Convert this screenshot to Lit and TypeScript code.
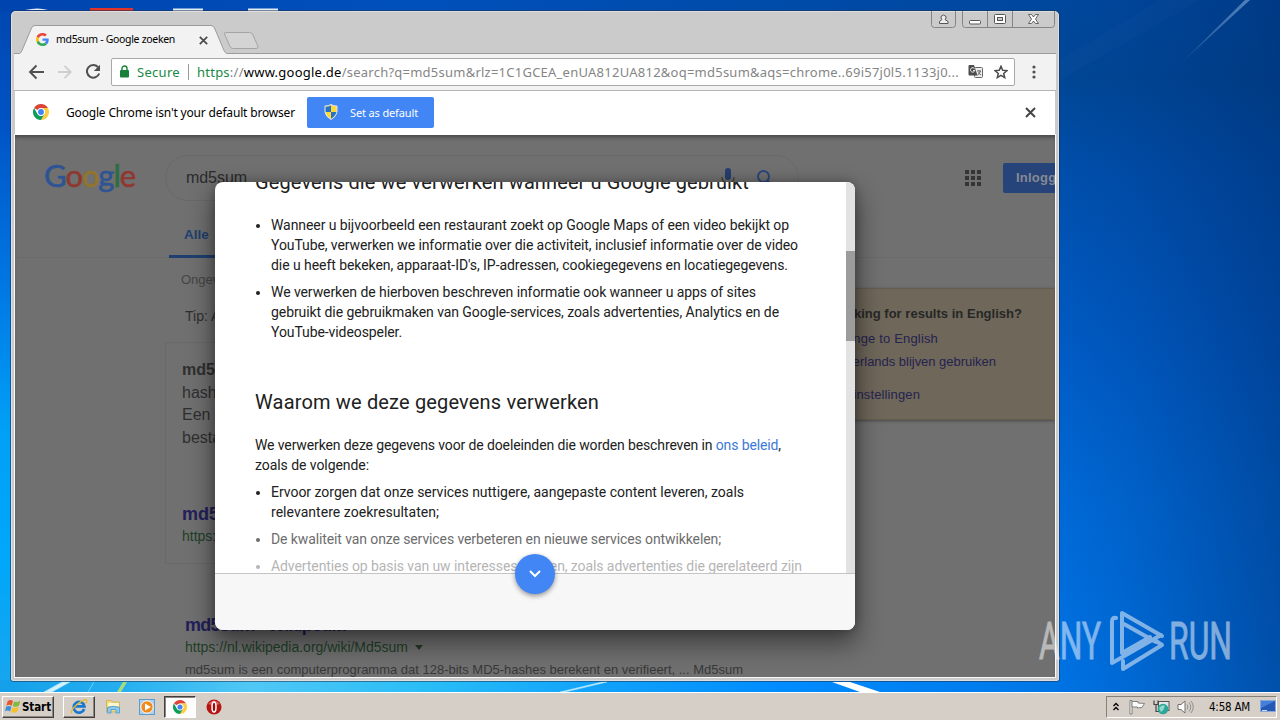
import { LitElement, html, css, svg } from "lit";
import { customElement, property } from "lit/decorators.js";

/* Inline run of text whose letter spacing is adjusted so that it fills a given width. */
@customElement("fit-text")
class FitText extends LitElement {
  @property({ type: Number }) w = 0;
  static styles = css`
    :host { display: inline-block; white-space: pre; flex: none; }
  `;
  render() {
    return html`<slot></slot>`;
  }
  firstUpdated() {
    const n = (this.textContent || "").length;
    const natural = this.getBoundingClientRect().width;
    if (this.w && n > 1) this.style.letterSpacing = (this.w - natural) / n + "px";
  }
}

const chromeLogo = svg`
  <circle cx="12" cy="12" r="12" fill="#fff"/>
  <path d="M12 0A12 12 0 0 1 22.4 6H12a6 6 0 0 0-5.2 3L1.6 6A12 12 0 0 1 12 0z" fill="#db4437"/>
  <path d="M22.4 6A12 12 0 0 1 12 24l5.2-9A6 6 0 0 0 17.2 9 L12 6z" fill="#ffcd40"/>
  <path d="M1.6 6A12 12 0 0 0 12 24l5.2-9A6 6 0 0 1 6.8 15z" fill="#0f9d58"/>
  <circle cx="12" cy="12" r="5.6" fill="#fff"/><circle cx="12" cy="12" r="4.4" fill="#4285f4"/>`;

@customElement("browser-chrome")
class BrowserChrome extends LitElement {
  static styles = css`
    :host { display: block; font-family: "Noto Sans", sans-serif; color: #000; }
    svg { display: block; flex: none; }
    .strip { height: 43px; display: flex; position: relative; }
    .tab { position: absolute; left: 25px; top: 14px; height: 28px; display: flex; align-items: center; font-size: 10.500px; }
    .tab svg { margin-top: 1px; }
    .tab fit-text { margin-left: 7px; margin-top: -1px; }
    .tab .x { margin-left: 24px; margin-top: 2px; }
    .controls { position: absolute; right: 4px; top: 0; }
    .bar { height: 37px; box-sizing: border-box; background: #f2f2f2; display: flex; align-items: center; padding: 0 0 1px 14px; margin: 0 3px; border-bottom: 1px solid #b4b4b4; }
    .nav { display: flex; gap: 12px; margin-right: 10px; }
    .omni { box-sizing: border-box; width: 904px; height: 28px; background: #fff; border: 1px solid #a8a8a8; border-radius: 2px; display: flex; align-items: center; padding-left: 7px; font-size: 13px; color: #858585; }
    .green { color: #188a45; }
    .sec { margin-left: 7px; }
    .sep { width: 1px; height: 16px; background: #999; margin: 0 8px; }
    .url b { font-weight: 400; color: #000; }
    .url i { font-style: normal; color: #188a45; }
    .tr { margin-left: 9px; margin-right: 11px; }
    .dots { margin-left: 16px; }
    .info { height: 44px; box-sizing: border-box; background: #fff; margin: 0 4px; display: flex; align-items: center; padding: 0 0 2px 18px; }
    .info .msg { margin-left: 17px; font-size: 12px; }
    .set { margin-left: 12px; width: 127px; height: 31px; background: #4285f4; border-radius: 2px; color: #fff; display: flex; align-items: center; padding-left: 17px; box-sizing: border-box; font-size: 11px; }
    .set fit-text { margin-left: 12px; }
    .close { margin-left: auto; margin-right: 19px; }
  `;
  render() {
    return html`
      <div class="strip">
        <svg width="1048" height="43" viewBox="0 0 1048 43">
          <path d="M3 43V42H8Q10 42 11 39.500L20.500 17Q21.500 14.500 24 14.500H200Q202.500 14.500 203.500 17L213 39.500Q214.500 42 216 42H1045V43z" fill="#f2f2f2"/>
          <path d="M3 42.500H8Q10 42.500 11 39.500L20.500 17Q21.500 14.500 24 14.500H200Q202.500 14.500 203.500 17L213 39.500Q214.500 42.500 216 42.500H1045" fill="none" stroke="#9c9c9c"/>
          <path d="M12 42.500H212" stroke="#f2f2f2"/>
          <path d="M214.500 21.500H238.500Q241 21.500 242 24L247 35.500Q247.500 37.500 245 37.500H221.500Q220 37.500 219 35.500L213.500 23Q213 21.500 214.500 21.500z" fill="#d4d4d4" stroke="#a4a4a4"/>
        </svg>
        <div class="tab">
          <svg width="13" height="13" viewBox="0 0 48 48">
            <path fill="#EA4335" d="M24 9.500c3.540 0 6.710 1.220 9.210 3.600l6.850-6.850C35.900 2.380 30.470 0 24 0 14.620 0 6.510 5.380 2.560 13.220l7.980 6.190C12.430 13.720 17.740 9.500 24 9.500z"/>
            <path fill="#4285F4" d="M46.980 24.550c0-1.570-.15-3.090-.38-4.550H24v9.020h12.940c-.58 2.960-2.260 5.480-4.780 7.180l7.730 6c4.510-4.180 7.090-10.360 7.090-17.650z"/>
            <path fill="#FBBC05" d="M10.530 28.590A14.500 14.500 0 0 1 9.770 24c0-1.600.27-3.140.76-4.590l-7.980-6.190A24 24 0 0 0 0 24c0 3.880.92 7.540 2.560 10.780z"/>
            <path fill="#34A853" d="M24 48c6.480 0 11.930-2.130 15.890-5.810l-7.730-6c-2.150 1.450-4.920 2.300-8.160 2.300-6.260 0-11.570-4.220-13.470-9.910l-7.980 6.190C6.510 42.620 14.620 48 24 48z"/>
          </svg>
          <fit-text w="119">md5sum - Google zoeken</fit-text>
          <svg class="x" width="9" height="9" viewBox="0 0 9 9"><path d="M.8.8l7.400 7.400M8.200.8L.8 8.200" stroke="#4a4a4a" stroke-width="1.700"/></svg>
        </div>
        <svg class="controls" width="124" height="18" viewBox="0 0 124 18">
          <path d="M.5 0V13.500Q.5 16.500 3.500 16.500H21.500Q24.500 16.500 24.500 13.500V0M31.500 0V13.500Q31.500 16.500 34.500 16.500H120.500Q123.500 16.500 123.500 13.500V0M56.500 0V16M81.500 0V16" fill="none" stroke="#858585"/>
          <path d="M8.500 12.500V10.500L11 8.500Q9.500 7 10 5.500Q12.500 2.500 15 5.500Q15.500 7 14 8.500L17 10.500V12.500z" fill="#eee" stroke="#555"/>
          <rect x="38.500" y="9.500" width="11" height="3.500" rx="1" fill="#fff" stroke="#555"/>
          <rect x="63.500" y="3.500" width="11" height="9" rx="1" fill="#fff" stroke="#555"/><rect x="66.500" y="6.500" width="5" height="3" fill="#ccc" stroke="#555"/>
          <path d="M97.500 3.500h3l2 2.500 2-2.500h3L104.500 8l3 4.500h-3l-2-2.500-2 2.500h-3L100.500 8z" fill="#fff" stroke="#555" stroke-width=".9"/>
        </svg>
      </div>
      <div class="bar">
        <div class="nav">
          <svg width="17" height="16" viewBox="0 0 17 16"><path d="M16 8H2.500M8.500 1.500L2 8l6.500 6.500" fill="none" stroke="#505050" stroke-width="1.900"/></svg>
          <svg width="16" height="16" viewBox="0 0 16 16"><path d="M1 8h12.500M7.500 1.800L13.700 8l-6.200 6.200" fill="none" stroke="#cfcfcf" stroke-width="1.900"/></svg>
          <svg width="16" height="16" viewBox="0 0 16 16"><path d="M13 3.200A6.300 6.300 0 1 0 14.200 9.500" fill="none" stroke="#505050" stroke-width="2"/><path d="M15 .8V7H8.800z" fill="#505050"/></svg>
        </div>
        <div class="omni">
          <svg width="11" height="13" viewBox="0 0 11 13"><rect x="1" y="5" width="9" height="7.500" rx="1" fill="#188038"/><path d="M3 6V3.500a2.500 2.500 0 0 1 5 0V6" fill="none" stroke="#188038" stroke-width="1.400"/></svg>
          <fit-text class="sec green" w="43">Secure</fit-text>
          <span class="sep"></span>
          <fit-text class="url" w="762"><i>https</i>://<b>www.google.de</b>/search?q=md5sum&amp;rlz=1C1GCEA_enUA812UA812&amp;oq=md5sum&amp;aqs=chrome..69i57j0l5.1133j0...</fit-text>
          <svg class="tr" width="15" height="15" viewBox="0 0 15 15"><rect x="6.500" y="3.500" width="8" height="10" rx="1" fill="#eee" stroke="#666"/><path d="M1.500 1H6l3.500 10.500H1.500Q.5 11.500.5 10.500V2Q.5 1 1.500 1z" fill="#4c4c4c"/><path d="M6.500 4.700A2.200 2.200 0 1 0 6.800 6.500H5" fill="none" stroke="#fff" stroke-width=".9"/><path d="M9 7h4M11 6v1M12.500 7Q11.500 10 9.500 11M10 8.500l3 2.500" fill="none" stroke="#555" stroke-width=".9"/></svg>
          <svg width="14" height="14" viewBox="0 0 14 14"><path d="M7 1.200l1.700 4 4.300.4-3.300 2.800 1 4.200L7 10.400l-3.700 2.200 1-4.200L1 5.600l4.300-.4z" fill="none" stroke="#4c4c4c" stroke-width="1.500"/></svg>
        </div>
        <svg class="dots" width="6" height="14" viewBox="0 0 6 14"><circle cx="3" cy="2" r="1.600" fill="#505050"/><circle cx="3" cy="7" r="1.600" fill="#505050"/><circle cx="3" cy="12" r="1.600" fill="#505050"/></svg>
      </div>
      <div class="info">
        <svg width="16" height="16" viewBox="0 0 24 24">${chromeLogo}</svg>
        <fit-text class="msg" w="229">Google Chrome isn't your default browser</fit-text>
        <div class="set">
          <svg width="14" height="16" viewBox="0 0 14 16"><path d="M7 .5Q9.500 2 13 2V8Q12.500 12.500 7 15.500Q1.500 12.500 1 8V2Q4.500 2 7 .5z" fill="#ffd83a" stroke="#dce6f5"/><path d="M7 1.500V8H1.600V2.700Q4.500 2.700 7 1.500zM7 8h5.400Q11.500 12 7 14.700z" fill="#2572c8"/></svg>
          <fit-text w="68">Set as default</fit-text>
        </div>
        <svg class="close" width="11" height="11" viewBox="0 0 11 11"><path d="M1 1l9 9M10 1l-9 9" stroke="#454545" stroke-width="2"/></svg>
      </div>`;
  }
}

@customElement("results-page")
class ResultsPage extends LitElement {
  static styles = css`
    :host { display: block; background: #707070; overflow: hidden; font-family: "Liberation Sans", Arial, sans-serif; color: #2f2f2f; white-space: nowrap; box-shadow: inset 0 4px 4px -2px rgba(0,0,0,.4); }
    svg { display: block; flex: none; }
    .head { height: 123px; border-bottom: 1px solid #6a6a6a; padding-top: 20px; box-sizing: border-box; display: flex; align-items: flex-start; }
    .logo { flex: none; margin: 0 0 0 29px; width: 121px; height: 40px; font: 400 31px/40px Lato, sans-serif; -webkit-text-stroke: .6px; }
    .b { color: #2f5494; } .r { color: #8f3832; } .y { color: #92742a; } .g { color: #2b6e41; }
    .mid { width: 800px; flex: none; }
    .pill { box-sizing: border-box; width: 634px; height: 46px; border: 1px solid #696969; border-radius: 23px; display: flex; padding: 0 24px 0 20px; align-items: center; font-size: 16px; color: #2b2b2b; }
    .pill .mic { margin-left: auto; margin-right: 21px; }
    .nav { margin: 20px 0 0 4px; width: 80px; height: 37px; padding: 5px 0 0 15px; box-sizing: border-box; border-bottom: 3px solid #203f70; color: #20406f; font-weight: 700; font-size: 13.500px; line-height: 18px; }
    .side { display: flex; align-items: center; margin-top: 8px; height: 30px; flex: none; }
    .btn { margin-left: 22px; width: 80px; height: 30px; line-height: 30px; border-radius: 2px; background: #26437a; color: #858a94; font-weight: 700; font-size: 13px; padding-left: 13px; box-sizing: border-box; }
    .cols { display: flex; align-items: flex-start; }
    .main { flex: none; width: 740px; padding-left: 150px; box-sizing: border-box; }
    .stats { font-size: 13px; line-height: 16px; padding: 14px 0 0 16px; color: #454545; }
    .tip { font-size: 14px; line-height: 18px; padding: 19px 0 0 20px; }
    .card { margin-top: 17px; width: 640px; height: 222px; border: 1px solid #696969; box-sizing: border-box; padding: 16px 16px 15px; border-radius: 2px; font-size: 16px; line-height: 22.500px; }
    .t { font-weight: 700; font-size: 18px; color: #23205a; }
    .u { font-size: 14px; line-height: 18px; color: #1f4028; display: flex; align-items: center; gap: 7px; }
    .card .t { margin-top: 53px; line-height: 24px; }
    .card .u { margin-top: 1px; }
    .hit { padding: 49px 0 0 20px; }
    .hit .t { line-height: 24px; }
    .hit .u { margin-top: 1px; }
    .hit .d { font-size: 13px; line-height: 16px; margin-top: 6px; color: #383838; }
    .lang { flex: none; margin-top: 30px; width: 300px; height: 132px; box-sizing: border-box; background: #6e675a; border: 1px solid #655d4d; box-shadow: 0 1px 3px rgba(0,0,0,.35); padding: 17px 0 0 73px; font-size: 13px; color: #26234f; line-height: 16px; }
    .lang b { display: block; color: #272727; margin: 0 0 9px 1px; }
    .lang div { margin-bottom: 7px; }
    .lang .s { margin: 17px 0 0 -5px; }
  `;
  render() {
    return html`
      <div class="head">
        <div class="logo"><fit-text w="91"><span class="b">G</span><span class="r">o</span><span class="y">o</span><span class="b">g</span><span class="g">l</span><span class="r">e</span></fit-text></div>
        <div class="mid">
          <div class="pill"><fit-text w="61">md5sum</fit-text>
            <svg class="mic" width="14" height="20" viewBox="0 0 14 20"><rect x="4" y="0" width="6" height="12" rx="3" fill="#253e70"/><path d="M1 9q0 6 6 6t6-6M7 15v4" fill="none" stroke="#4d4438" stroke-width="1.500"/></svg>
            <svg width="18" height="18" viewBox="0 0 18 18"><circle cx="7.500" cy="7.500" r="5.500" fill="none" stroke="#2c457a" stroke-width="2"/><path d="M11.500 11.500l5 5" stroke="#2c457a" stroke-width="2"/></svg>
          </div>
          <div class="nav">Alle</div>
        </div>
        <div class="side">
          <svg width="16" height="16" viewBox="0 0 16 16" fill="#353535">${[0, 6, 12].map((y) => [0, 6, 12].map((x) => svg`<rect x=${x} y=${y} width="4" height="4"/>`))}</svg>
          <div class="btn"><fit-text w="56">Inloggen</fit-text></div>
        </div>
      </div>
      <div class="cols">
        <div class="main">
          <div class="stats">Ongeveer</div>
          <div class="tip">Tip: Alleen</div>
          <div class="card">
            <b>md5sum</b><br />hashes<br />Een hash<br />bestanden
            <div class="t">md5sum</div>
            <div class="u">https://nl</div>
          </div>
          <div class="hit">
            <div class="t"><fit-text w="160">md5sum - Wikipedia</fit-text></div>
            <div class="u"><fit-text w="223">https://nl.wikipedia.org/wiki/Md5sum</fit-text><svg width="8" height="5" viewBox="0 0 8 5"><path d="M0 0h8L4 5z" fill="#273a2c"/></svg></div>
            <div class="d"><fit-text w="558">md5sum is een computerprogramma dat 128-bits MD5-hashes berekent en verifieert, ... Md5sum</fit-text></div>
          </div>
        </div>
        <div class="lang">
          <b><fit-text w="192">Looking for results in English?</fit-text></b>
          <div><fit-text w="109">Change to English</fit-text></div>
          <div><fit-text w="167">Nederlands blijven gebruiken</fit-text></div>
          <div class="s"><fit-text w="96">Zoekinstellingen</fit-text></div>
        </div>
      </div>`;
  }
}

@customElement("consent-dialog")
class ConsentDialog extends LitElement {
  static styles = css`
    :host { display: flex; flex-direction: column; background: #fff; border-radius: 8px; box-shadow: 0 12px 26px 2px rgba(0,0,0,.45), 0 0 10px rgba(0,0,0,.25); font-family: Roboto, sans-serif; font-size: 14px; line-height: 20px; color: #212121; }
    .view { height: 391px; display: flex; overflow: hidden; border-radius: 8px 8px 0 0; }
    .text { flex: 1; padding-left: 40px; margin-top: -10px; }
    h2 { font-size: 20px; line-height: 20px; font-weight: 400; margin: 0; }
    ul { list-style: none; margin: 0; padding: 0; }
    li { display: flex; margin-bottom: 7px; white-space: nowrap; }
    li::before { content: ""; width: 4px; height: 4px; border-radius: 50%; background: currentColor; margin: 9px 11px 0 1px; flex: none; }
    .a { margin-top: 23px; }
    .h { margin-top: 50px; }
    p { margin: 23px 0 7px; white-space: nowrap; }
    a { color: #3d79d8; }
    .f1 { color: #6d6d6d; } .f2 { color: #b5b5b5; }
    .track { width: 9px; padding-top: 69px; background: #e2e2e2; box-sizing: border-box; }
    .thumb { height: 90px; background: #9c9c9c; }
    .foot { flex: 1; border-top: 1px solid #c4c4c4; background: #f7f7f7; border-radius: 0 0 8px 8px; }
    .fab { position: absolute; left: 300px; top: 372px; width: 40px; height: 40px; border-radius: 50%; background: #4285f4; display: grid; place-items: center; box-shadow: 0 2px 5px rgba(0,0,0,.4); }
  `;
  render() {
    return html`
      <div class="view">
        <div class="text">
          <h2><fit-text w="494">Gegevens die we verwerken wanneer u Google gebruikt</fit-text></h2>
          <ul class="a">
            <li><div><fit-text w="518">Wanneer u bijvoorbeeld een restaurant zoekt op Google Maps of een video bekijkt op</fit-text><br /><fit-text w="527">YouTube, verwerken we informatie over die activiteit, inclusief informatie over de video</fit-text><br /><fit-text w="517">die u heeft bekeken, apparaat-ID's, IP-adressen, cookiegegevens en locatiegegevens.</fit-text></div></li>
            <li><div><fit-text w="485">We verwerken de hierboven beschreven informatie ook wanneer u apps of sites</fit-text><br /><fit-text w="508">gebruikt die gebruikmaken van Google-services, zoals advertenties, Analytics en de</fit-text><br /><fit-text w="131">YouTube-videospeler.</fit-text></div></li>
          </ul>
          <h2 class="h"><fit-text w="344">Waarom we deze gegevens verwerken</fit-text></h2>
          <p><fit-text w="526">We verwerken deze gegevens voor de doeleinden die worden beschreven in <a>ons beleid</a>,</fit-text><br /><fit-text w="114">zoals de volgende:</fit-text></p>
          <ul>
            <li><div><fit-text w="473">Ervoor zorgen dat onze services nuttigere, aangepaste content leveren, zoals</fit-text><br /><fit-text w="168">relevantere zoekresultaten;</fit-text></div></li>
            <li class="f1"><fit-text w="450">De kwaliteit van onze services verbeteren en nieuwe services ontwikkelen;</fit-text></li>
            <li class="f2"><fit-text w="531">Advertenties op basis van uw interesses leveren, zoals advertenties die gerelateerd zijn</fit-text></li>
          </ul>
        </div>
        <div class="track"><div class="thumb"></div></div>
      </div>
      <div class="foot"></div>
      <div class="fab"><svg width="12" height="8" viewBox="0 0 12 8"><path d="M1 1l5 5 5-5" fill="none" stroke="#fff" stroke-width="2"/></svg></div>`;
  }
}

@customElement("task-bar")
class TaskBar extends LitElement {
  static styles = css`
    :host { display: flex; align-items: center; height: 28px; box-sizing: border-box; background: #d6cfc7; border-top: 1px solid #fff; padding: 0 3px 0 2px; font-family: "DejaVu Sans Condensed", sans-serif; font-size: 11px; }
    svg { display: block; flex: none; }
    .btn { box-sizing: border-box; height: 22px; border: 1px solid; border-color: #fff #404040 #404040 #fff; box-shadow: inset -1px -1px #8c8680; display: flex; align-items: center; justify-content: center; }
    .start { width: 52px; font-weight: 700; font-size: 11.500px; color: #000; }
    .ie { width: 32px; margin-left: 9px; }
    .f { margin-left: 10px; } .m { margin-left: 17px; }
    .c { width: 32px; margin-left: 9px; background: #fdfdfd; border-color: #404040 #fff #fff #404040; box-shadow: inset 1px 1px #8c8680; }
    .o { margin-left: 10px; }
    .tray { margin-left: auto; box-sizing: border-box; width: 171px; height: 22px; border: 1px solid; border-color: #858078 #fff #fff #858078; display: flex; align-items: center; padding-left: 6px; }
    .flag { margin-left: 10px; } .net, .vol { margin-left: 7px; }
    .time { margin-left: 15px; width: 52px; font-size: 11.500px; }
  `;
  render() {
    return html`
      <div class="btn start">
        <svg width="17" height="17" viewBox="0 0 16 16"><path d="M2.500 3Q5 1 7.500 2.800L6.300 7.200Q4 5.500 1.300 7.300z" fill="#e8562c"/><path d="M8.500 3.200Q11.500 4.500 14.500 2.500L13.200 7Q10.500 9 7.300 7.600z" fill="#7fba3c"/><path d="M1 8.300Q3.700 6.700 6 8.300L4.800 12.700Q2.500 11 0 12.600z" fill="#3f8fd8"/><path d="M7 8.800Q10 10 12.900 8.200L11.500 12.900Q8.500 14.700 5.800 13z" fill="#f8c12c"/></svg>
        <fit-text w="29">Start</fit-text>
      </div>
      <div class="btn ie"><svg width="18" height="17" viewBox="0 0 18 17"><path d="M14.200 11A5.400 5.400 0 1 1 14.400 8.300H5" fill="none" stroke="#1878cf" stroke-width="2.700"/><path d="M2 15.500Q-.5 13 7 6.500Q14.500.5 16.500 2Q17.500 3 15.500 5.500" fill="none" stroke="#e8b830" stroke-width="1.400"/></svg></div>
      <svg class="f" width="17" height="16" viewBox="0 0 17 16"><path d="M1.500 1.500h5l1 1.500h7v10h-13z" fill="#efd982" stroke="#d3b65c"/><path d="M3 4h11v3H3z" fill="#fdf7d0"/><path d="M2.500 14V8.500Q8 6 14.500 8.500V14h-3.500v-3.500H6V14z" fill="#8cc9ec" stroke="#5aa3d2"/></svg>
      <svg class="m" width="16" height="16" viewBox="0 0 16 16"><rect x=".5" y=".5" width="15" height="15" fill="#a9d0ef" stroke="#5a9bd0"/><circle cx="8" cy="8" r="6.200" fill="#f08a1d" stroke="#fff"/><path d="M6 4.500L12 8l-6 3.500z" fill="#fff"/></svg>
      <div class="btn c"><svg width="14" height="14" viewBox="0 0 24 24">${chromeLogo}</svg></div>
      <svg class="o" width="16" height="16" viewBox="0 0 16 16"><circle cx="8" cy="8" r="7.500" fill="#b71414"/><path d="M2 5Q8-2 14 5Q8 7 2 5z" fill="#d8605c"/><ellipse cx="8" cy="8" rx="2" ry="5" fill="#9c0e0e" stroke="#fff" stroke-width="1.500"/></svg>
      <div class="tray">
        <svg width="6" height="9" viewBox="0 0 6 9"><path d="M.5 4L3 1.500 5.500 4M.5 8L3 5.500 5.500 8" fill="none" stroke="#000" stroke-width="1.300"/></svg>
        <svg class="flag" width="17" height="16" viewBox="0 0 17 16"><path d="M1 1.500h2V15H1z" fill="#fff" stroke="#6a6a6a" stroke-width=".8"/><path d="M3 2.500h6v1.500l6.500.5-2.500 4-4.500.5v-1H3z" fill="#fafafa" stroke="#6a6a6a" stroke-width=".8"/></svg>
        <svg class="net" width="17" height="16" viewBox="0 0 17 16"><rect x="5.500" y="2.500" width="10.500" height="9" fill="#dfe9ec" stroke="#555"/><path d="M1 1.500v4h4v-4M3 5.500v7h4" fill="none" stroke="#444" stroke-width="1.200"/><circle cx="10" cy="10" r="5.300" fill="#2fa59a"/><path d="M6 9q3-4 6-2-1 4-4 6z" fill="#8bdcc8"/></svg>
        <svg class="vol" width="17" height="16" viewBox="0 0 17 16"><path d="M1 5.500h3L8 2v12l-4-3.500H1z" fill="#fff" stroke="#707070"/><path d="M10 5.500q2 2.500 0 5M12 3.500q3.500 4.500 0 9M14 2q4.500 6 0 12" fill="none" stroke="#909090"/></svg>
        <div class="time"><fit-text w="41">4:58 AM</fit-text></div>
        <svg width="16" height="13" viewBox="0 0 16 13"><rect x=".5" y=".5" width="15" height="11" fill="#2458b4" stroke="#8aa6d4"/><path d="M1 1h14L1 8z" fill="#4380dc"/><path d="M2 10.500h5" stroke="#c8dcff"/></svg>
      </div>`;
  }
}

@customElement("app-root")
class AppRoot extends LitElement {
  static styles = css`
    :host { display: grid; grid-template-rows: 692px 28px; width: 1280px; height: 720px; overflow: hidden; position: relative; }
    .desk { position: relative; overflow: hidden; background:
      linear-gradient(to right, transparent 1050px, rgba(0,48,120,.16) 1130px, rgba(0,44,110,.5) 1280px),
      linear-gradient(#00489e 0, #004796 80px, #004fac 170px, #005cc6 350px, #006ad8 500px, #0074e6 692px); }
    .left { position: absolute; left: 0; top: 0; width: 12px; height: 692px; background: linear-gradient(#0046b0, #0053c4 120px, #0078e4 290px, #00a0f6 430px, #00a7fa 560px, #19a5ee); }
    .top { position: absolute; left: 0; top: 0; width: 1060px; height: 12px; background: linear-gradient(to right, #0044ae, #0050bc 400px, #004ba8 800px, #00479d); }
    .bottom { position: absolute; left: 0; top: 680px; width: 1060px; height: 12px; background: linear-gradient(to right, #139fe9, #25aff0 120px, #50c8f5 250px, #28bdf7 430px, #10a2fa 600px, #008cff 780px, #007bec 1000px, #0074e4); }
    svg { position: absolute; left: 0; top: 0; }
    .win { position: absolute; left: 11px; top: 11px; width: 1048px; height: 670px; border-radius: 5px 5px 3px 3px; background: #cbcbcb; box-shadow: 0 0 0 1px rgba(30,50,80,.55), inset 0 0 0 1px #dedede; display: flex; flex-direction: column; }
    results-page { height: 542px; margin: 0 4px; outline: 1px solid #f8f8f8; }
    browser-chrome { height: 124px; position: relative; }
    consent-dialog { position: absolute; left: 204px; top: 171px; width: 640px; height: 448px; }
  `;
  render() {
    return html`
      <div class="desk">
        <div class="left"></div><div class="top"></div><div class="bottom"></div>
        <svg width="1280" height="692" viewBox="0 0 1280 692">
          <defs>
            <linearGradient id="ray" x1="0" y1="1" x2="1" y2="0"><stop offset="0" stop-color="#fff" stop-opacity="0"/><stop offset="1" stop-color="#9cc4ee" stop-opacity=".5"/></linearGradient>
          </defs>
          <path d="M1178 66L1245 0h5z" fill="url(#ray)"/>
          <path d="M1060 60L1160 0h40L1060 80z" fill="#fff" opacity=".015"/>
          <path d="M25 10q13-3 23 0zM173 8.500h30v2.500h-30zM248 8.500h30v2.500h-30z" fill="#e4ecf4"/>
          <path d="M90 8h43v3H90z" fill="#df3427"/>
          <path d="M44 692L62 682h8L52 692zM88 692l6-10M560 692l42-10h5l-42 10z" fill="#d4f1fb" stroke="#a5e3f8" stroke-width=".6"/>
          <path d="M117 692l6-10h4l-6 10z" fill="#a5dc7c"/>
          <path d="M832 682h18l30 10h-20z" fill="#fff"/>
        </svg>
        <div class="win">
          <browser-chrome></browser-chrome>
          <results-page></results-page>
          <consent-dialog></consent-dialog>
        </div>
        <svg width="1280" height="692" viewBox="0 0 1280 692">
          <g fill="#fff" opacity=".5" font-family="Roboto, sans-serif" font-size="51.5">
            <text x="1039" y="659" textLength="62" lengthAdjust="spacingAndGlyphs" stroke="#fff" stroke-width=".8">ANY</text>
            <text x="1169" y="659" textLength="63" lengthAdjust="spacingAndGlyphs" stroke="#fff" stroke-width=".8">RUN</text>
            <g fill="none" stroke="#fff" stroke-width="4" stroke-linejoin="round" stroke-linecap="round">
              <path d="M1122 653V613L1162 636M1124 624l32 18M1116 618q-4-1-4 4v41l49-28M1122 653l28-16M1123 661v8l39-24-6-4"/>
            </g>
          </g>
        </svg>
      </div>
      <task-bar></task-bar>`;
  }
}
